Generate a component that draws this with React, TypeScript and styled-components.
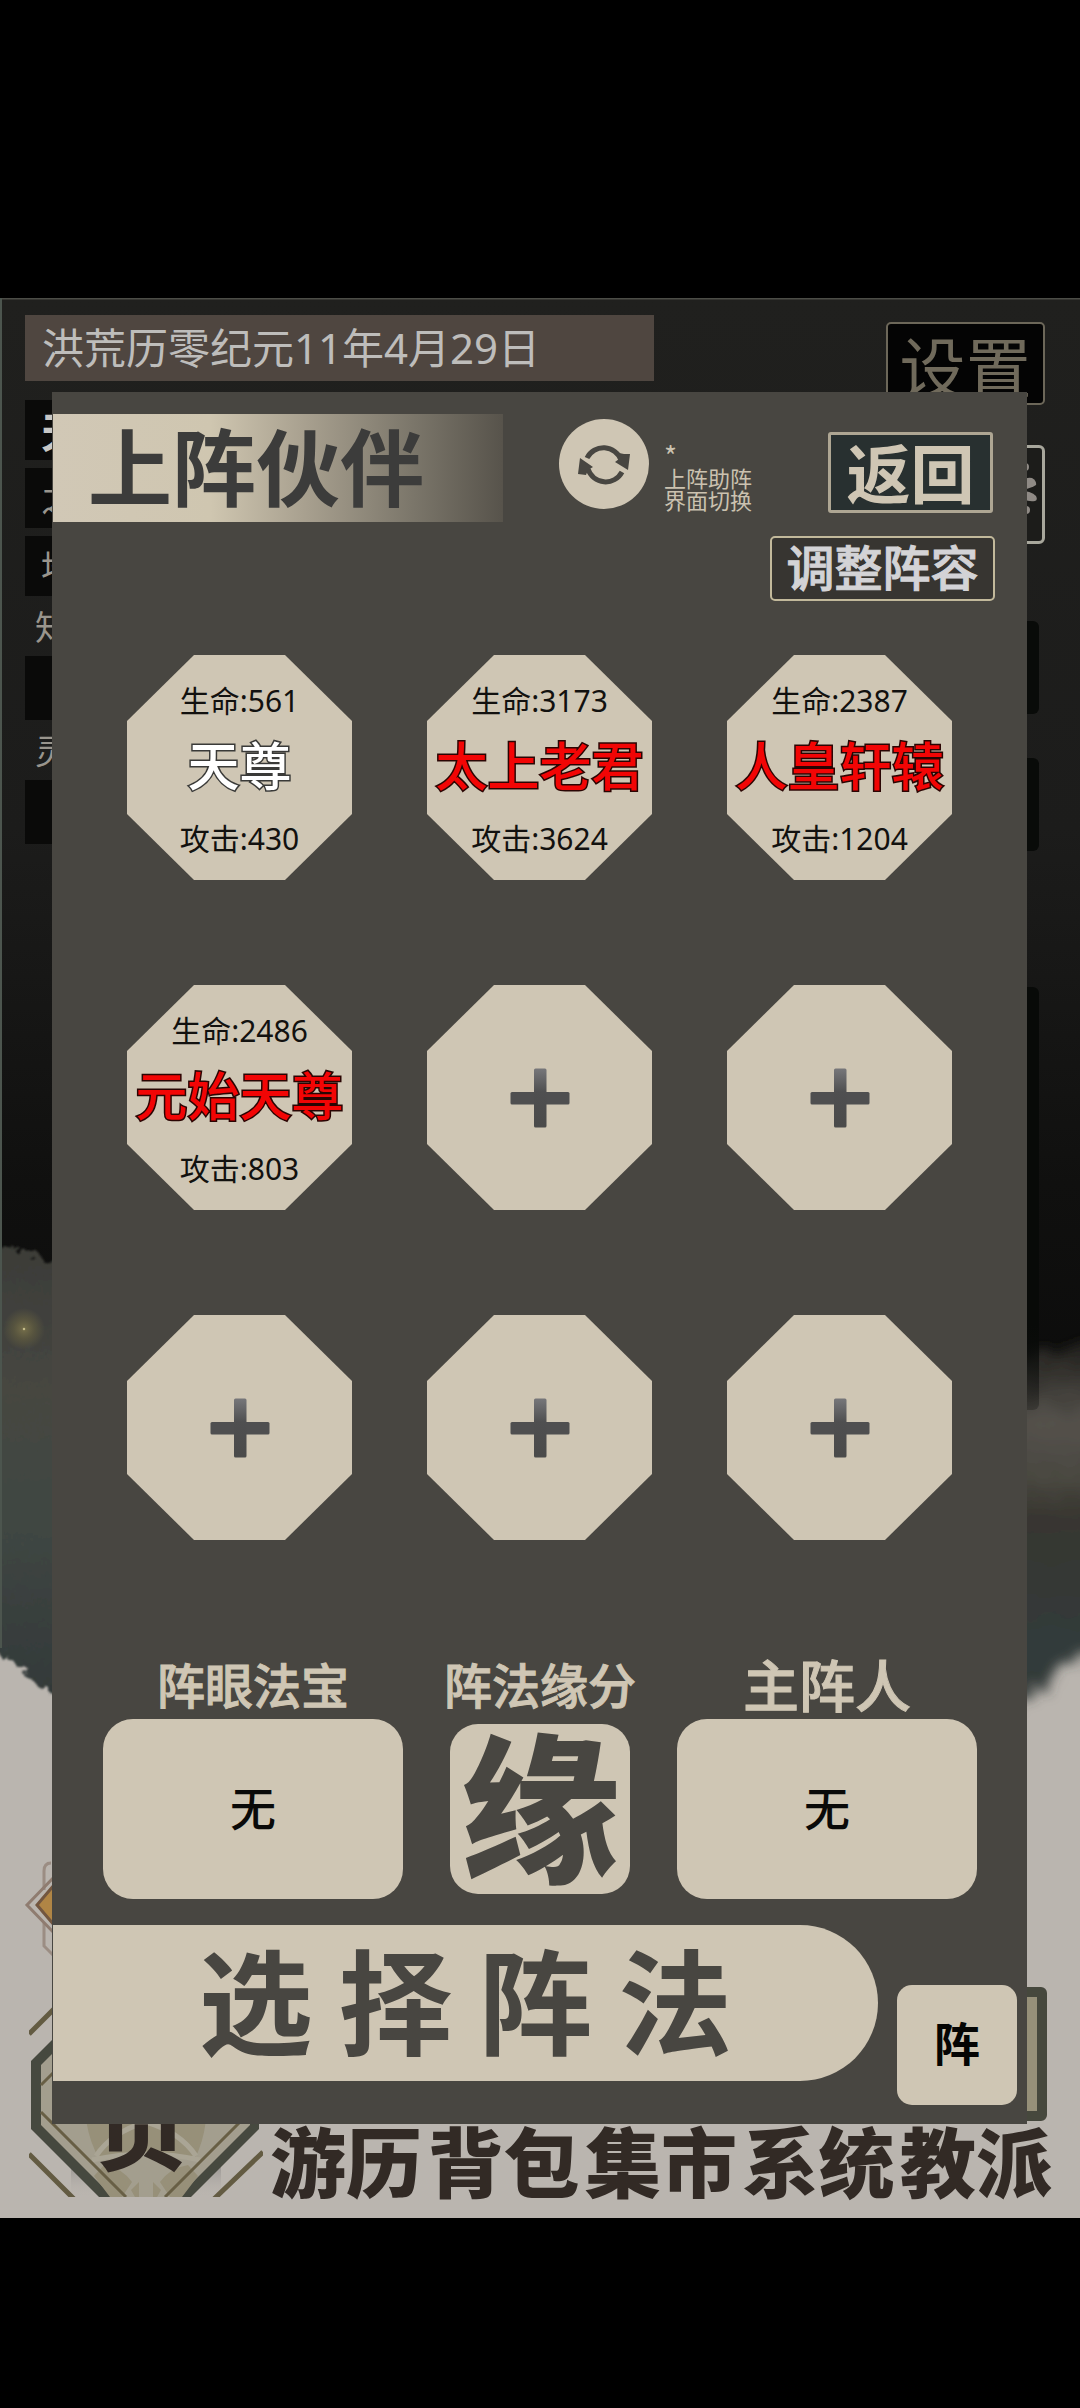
import React from "react";
import styled, { createGlobalStyle } from "styled-components";

const paper = "#cfc6b4";
const ink = "#484641";
const sans = `"Noto Sans", "Noto Sans CJK SC", sans-serif`;
const cjk = `"Noto Sans CJK SC", "Noto Sans", sans-serif`;

const GlobalStyle = createGlobalStyle`
  *, *::before, *::after { box-sizing: border-box; }
  body { margin: 0; background: #000; font-family: ${sans}; }
  button { margin: 0; padding: 0; border: 0; background: none; font: inherit; color: inherit; cursor: pointer; }
  h1, h2, p { margin: 0; font-weight: inherit; }
`;

const Page = styled.div`
  min-height: 100vh;
  padding: 298px 0 190px;
  background: #000;
`;

const Scene = styled.div`
  position: relative;
  overflow: hidden;
  padding: 94px 53px 94px 52px;
  background: #bab5af;
`;

const Landscape = styled.svg`
  position: absolute;
  inset: 0;
  width: 100%;
  height: 100%;
`;

const Hud = styled.div`
  position: absolute;
  inset: 0;
  display: flex;
  flex-direction: column;
  justify-content: space-between;
`;

const HudTop = styled.div`
  display: flex;
  justify-content: space-between;
  padding: 17px 35px 0 25px;
`;

const HudLeft = styled.div`
  display: flex;
  flex-direction: column;
`;

const DateBar = styled.p`
  width: 629px;
  height: 66px;
  margin-bottom: 19px;
  padding-left: 17px;
  background: #4f4640;
  color: #bebdbb;
  font-size: 42px;
  line-height: 66px;
  white-space: nowrap;
`;

const StatRow = styled.div<{ $dark?: boolean; $gap?: number; $bold?: boolean }>`
  width: 300px;
  height: 60px;
  margin-bottom: ${(p) => p.$gap ?? 0}px;
  padding-left: ${(p) => (p.$dark ? 16 : 10)}px;
  background: ${(p) => (p.$dark ? "#0a0a09" : "transparent")};
  color: ${(p) => (p.$bold ? "#c8c8c6" : "#99958d")};
  font: ${(p) => (p.$bold ? "700 42px" : "400 34px")}/60px ${cjk};
`;

const StatBar = styled.div`
  width: 300px;
  height: 64px;
  background: #0a0a09;
`;

const HudRight = styled.div`
  display: flex;
  flex-direction: column;
  align-items: flex-end;
  padding-top: 7px;
`;

const SettingsButton = styled.button`
  width: 159px;
  height: 83px;
  border: 2px solid #6c6759;
  border-radius: 5px;
  background: #040404;
  color: #706a5b;
  font: 400 66px/78px ${cjk};
  white-space: nowrap;
`;

const BlossomButton = styled.button`
  width: 159px;
  height: 99px;
  margin-top: 40px;
  border: 3px solid #a8a79c;
  border-radius: 6px;
  background: #1c1c1a;
`;

const ShadeBox = styled.div<{ $height: number; $top: number; $fade?: boolean }>`
  width: 159px;
  height: ${(p) => p.$height}px;
  margin: ${(p) => p.$top}px 6px 0 0;
  border-radius: 6px;
  background: ${(p) =>
    p.$fade ? "linear-gradient(#080a08 0%, #080a08 80%, rgba(20, 21, 19, 0.3) 100%)" : "#090b09"};
`;

const HudBottom = styled.div`
  display: flex;
  align-items: flex-end;
  gap: 7px;
  padding: 0 28px 21px 29px;
`;

const EmblemButton = styled.button`
  position: relative;
  flex: none;
  width: 234px;
  height: 190px;
  padding: 46px 10px 0 0;
  color: #322a25;
  font: 900 88px/88px ${cjk};
`;

const EmblemArt = styled.svg`
  position: absolute;
  inset: 0;
  width: 100%;
  height: 100%;
`;

const EmblemLabel = styled.span`
  position: relative;
`;

const HudFooter = styled.div`
  display: flex;
  flex: 1;
  flex-direction: column;
  align-items: stretch;
`;

const SideTab = styled.div`
  align-self: flex-end;
  width: 120px;
  height: 134px;
  margin-right: 5px;
  border: 10px solid #46483d;
  border-radius: 6px;
  background: #969079;
`;

const Nav = styled.nav`
  display: flex;
  justify-content: space-between;
  color: #322a25;
  font: 900 76px/76px ${cjk};
  white-space: nowrap;
`;

const Panel = styled.main`
  position: relative;
  padding: 22px 0 19px;
  background: ${ink};
`;

const Header = styled.header`
  display: flex;
  align-items: flex-start;
  padding: 0 34px 0 1px;
`;

const Title = styled.h1`
  width: 450px;
  height: 108px;
  padding-left: 35px;
  background: linear-gradient(90deg, #d1c8b6 0%, #cfc6b0 35%, #a8a08f 56%, #7b766a 80%, #57534b 100%);
  color: #3c3c3b;
  font: 700 84px/100px ${cjk};
  white-space: nowrap;
`;

const SwitchButton = styled.button`
  display: grid;
  place-items: center;
  width: 90px;
  height: 90px;
  margin: 5px 0 0 56px;
  border-radius: 50%;
  background: ${paper};
`;

const SwitchNote = styled.p`
  margin: 30px 0 0 15px;
  color: #cbc2b0;
  font: 400 22px/22px ${cjk};
`;

const NoteMark = styled.span`
  display: block;
  font-size: 28px;
`;

const BackButton = styled.button`
  width: 165px;
  height: 81px;
  margin: 18px 0 0 auto;
  padding-bottom: 6px;
  border: 3px solid #aea693;
  border-radius: 3px;
  background: #283030;
  color: ${paper};
  font: 700 64px/68px ${cjk};
  white-space: nowrap;
`;

const AdjustButton = styled.button`
  display: block;
  width: 225px;
  height: 65px;
  margin: 14px 32px 54px auto;
  padding-bottom: 8px;
  border: 2px solid #c2b99b;
  border-radius: 5px;
  background: #373531;
  color: #d3d3d6;
  font: 500 48px/52px ${cjk};
  -webkit-text-stroke: 1px #d3d3d6;
  white-space: nowrap;
`;

const Formation = styled.section`
  display: grid;
  grid-template-columns: repeat(3, 225px);
  justify-content: space-between;
  row-gap: 105px;
  padding: 0 75px;
`;

const Slot = styled.button`
  display: flex;
  flex-direction: column;
  align-items: center;
  justify-content: center;
  height: 225px;
  background: ${paper};
  clip-path: polygon(67px 0, 158px 0, 100% 66px, 100% 159px, 158px 100%, 67px 100%, 0 159px, 0 66px);
`;

const Stat = styled.span`
  padding-top: 4px;
  color: #12110f;
  font-size: 30px;
  line-height: 36px;
  white-space: nowrap;
`;

const Name = styled.span<{ $hero?: boolean }>`
  padding-bottom: 8px;
  color: ${(p) => (p.$hero ? "#fff" : "#f20505")};
  font: 500 52px/90px ${cjk};
  -webkit-text-stroke: 3px ${(p) => (p.$hero ? "#3a3a38" : "#2a0503")};
  paint-order: stroke fill;
  white-space: nowrap;
`;

const Options = styled.section`
  display: flex;
  justify-content: space-between;
  padding: 115px 50px 0 51px;
`;

const Option = styled.div`
  display: flex;
  flex-direction: column;
  align-items: center;
`;

const OptionTitle = styled.h2<{ $large?: boolean }>`
  padding-bottom: 8px;
  color: ${paper};
  font: 500 ${(p) => (p.$large ? 56 : 48)}px/56px ${cjk};
  -webkit-text-stroke: 1px ${paper};
  white-space: nowrap;
`;

const OptionButton = styled.button`
  width: 300px;
  height: 180px;
  padding-bottom: 6px;
  border-radius: 30px;
  background: ${paper};
  color: #0a0a09;
  font: 500 46px/60px ${cjk};
`;

const FateButton = styled.button`
  width: 180px;
  height: 170px;
  margin-top: 5px;
  padding-bottom: 18px;
  border-radius: 28px;
  background: ${paper};
  color: ${ink};
  font: 900 160px/152px ${cjk};
`;

const Actions = styled.footer`
  display: flex;
  justify-content: space-between;
  height: 180px;
  margin-top: 26px;
  padding: 0 10px 0 1px;
`;

const ChooseButton = styled.button`
  width: 825px;
  height: 156px;
  padding-bottom: 12px;
  border-radius: 0 78px 78px 0;
  background: ${paper};
  color: ${ink};
  font: 700 114px/144px ${cjk};
  white-space: nowrap;
`;

const FormationButton = styled.button`
  align-self: flex-end;
  width: 120px;
  height: 120px;
  padding-bottom: 8px;
  border-radius: 15px;
  background: ${paper};
  color: #050504;
  font: 700 46px/60px ${cjk};
`;

type Member = { name: string; hp: number; atk: number; hero?: boolean };

const members: (Member | null)[] = [
  { name: "天尊", hp: 561, atk: 430, hero: true },
  { name: "太上老君", hp: 3173, atk: 3624 },
  { name: "人皇轩辕", hp: 2387, atk: 1204 },
  { name: "元始天尊", hp: 2486, atk: 803 },
  null,
  null,
  null,
  null,
  null,
];

const navItems = ["游历", "背包", "集市", "系统", "教派"];

function Background() {
  return (
    <Landscape viewBox="0 0 1080 1920" preserveAspectRatio="none" aria-hidden="true">
      <defs>
        <linearGradient id="night" x1="0" y1="0" x2="0" y2="1">
          <stop offset="0" stopColor="#20201e" />
          <stop offset="0.45" stopColor="#1c1c1b" />
          <stop offset="0.75" stopColor="#10100f" />
          <stop offset="1" stopColor="#0a0a0a" />
        </linearGradient>
        <linearGradient id="hillLeft" x1="0" y1="0" x2="0" y2="1">
          <stop offset="0" stopColor="#3b3c38" />
          <stop offset="0.3" stopColor="#464641" />
          <stop offset="0.6" stopColor="#3f4643" />
          <stop offset="1" stopColor="#313737" />
        </linearGradient>
        <linearGradient id="hillRight" x1="0" y1="0" x2="0" y2="1">
          <stop offset="0" stopColor="#1b1b18" />
          <stop offset="0.12" stopColor="#35332f" />
          <stop offset="0.24" stopColor="#55524c" />
          <stop offset="0.4" stopColor="#48463f" />
          <stop offset="0.48" stopColor="#37362f" />
          <stop offset="0.78" stopColor="#333a3a" />
          <stop offset="1" stopColor="#343a39" />
        </linearGradient>
        <radialGradient id="firefly">
          <stop offset="0" stopColor="#fff6b8" />
          <stop offset="0.08" stopColor="#706a48" />
          <stop offset="0.5" stopColor="#5c583f" stopOpacity="0.8" />
          <stop offset="1" stopColor="#5b5840" stopOpacity="0" />
        </radialGradient>
        <filter id="mist" x="-20%" y="-20%" width="140%" height="140%">
          <feTurbulence type="fractalNoise" baseFrequency="0.12" numOctaves="3" seed="4" result="n" />
          <feDisplacementMap in="SourceGraphic" in2="n" xChannelSelector="R" yChannelSelector="G" scale="20" result="d" />
          <feGaussianBlur in="d" stdDeviation="1" />
        </filter>
        <filter id="haze" x="-30%" y="-30%" width="160%" height="160%">
          <feTurbulence type="fractalNoise" baseFrequency="0.08" numOctaves="3" seed="9" result="n" />
          <feDisplacementMap in="SourceGraphic" in2="n" xChannelSelector="R" yChannelSelector="G" scale="40" result="d" />
          <feGaussianBlur in="d" stdDeviation="6" />
        </filter>
      </defs>
      <rect width="1080" height="1180" fill="url(#night)" />
      <path d="M-40 948 L10 948 L40 958 L90 985 L90 1422 L54 1400 L28 1378 L0 1354 L-40 1330Z" fill="url(#hillLeft)" filter="url(#mist)" />
      <path d="M980 1070 L1140 1030 L1140 1345 L1080 1360 L1027 1400 L980 1420Z" fill="url(#hillRight)" filter="url(#haze)" />
      <circle cx="24" cy="1031" r="21" fill="url(#firefly)" />
      <g fill="none" stroke="#8f7c70" strokeWidth="3">
        <path d="M51 1565 q-7 0 -7 8 V1592 M44 1625 V1648 L56 1660" strokeOpacity="0.7" />
        <path d="M56 1577 L27 1607 L56 1637" />
        <path d="M60 1580 L37 1607 L60 1634" stroke="#725640" fill="#b08545" />
      </g>
      <path d="M0 0.5H1080" stroke="#4c4d47" strokeWidth="2" />
      <path d="M1 0V1350" stroke="#4c554e" strokeWidth="2" />
    </Landscape>
  );
}

function Emblem() {
  return (
    <EmblemButton type="button">
      <EmblemArt viewBox="29 2007 234 190" aria-hidden="true">
        <defs>
          <linearGradient id="cast" x1="0" y1="0" x2="0" y2="1">
            <stop offset="0" stopColor="#8d8a88" />
            <stop offset="1" stopColor="#bab5af" stopOpacity="0" />
          </linearGradient>
        </defs>
        <path d="M71 2160H221V2197H71Z" fill="url(#cast)" />
        <path d="M99 1993L31 2061V2129L99 2197H191L259 2129V2061L191 1993Z" fill="#46493f" />
        <path d="M113 1993L41 2065V2125L113 2197H178L250 2125V2065L178 1993Z" fill="#a39e8e" />
        <path d="M86 2120 Q90 2144 100 2160 Q150 2150 194 2160 Q203 2144 206 2120Z" fill="#979079" />
        <path d="M104 2165 Q122 2168 132 2182 L122 2197 L110 2197 L94 2176Z M188 2165 Q170 2168 160 2182 L170 2197 L182 2197 L198 2176Z" fill="#979079" />
        <path d="M131 2190l8-8v15h-4z M161 2190l-8-8v15h4z" fill="#979079" />
        <path d="M96 2156 Q112 2132 146 2122 Q180 2132 196 2156 M92 2160 Q146 2148 200 2160" fill="none" stroke="#aaa595" strokeWidth="5" />
        <path d="M41 2085L61 2065 M41 2112L126 2197 M165 2197L240 2122" stroke="#685f45" strokeWidth="3" fill="none" />
        <path d="M29 2034L56 2007 M29 2154L74 2199 M263 2152L214 2199" stroke="#635b42" strokeWidth="5" fill="none" />
      </EmblemArt>
      <EmblemLabel>页</EmblemLabel>
    </EmblemButton>
  );
}

function SwitchIcon() {
  return (
    <svg width="54" height="48" viewBox="0 0 54 48" aria-hidden="true">
      <path d="M10 18 A18.5 18.5 0 0 1 44 20" fill="none" stroke={ink} strokeWidth="5" />
      <path d="M45 32 A18.5 18.5 0 0 1 11 29" fill="none" stroke={ink} strokeWidth="5" />
      <path d="M38 22 L42 19 L42 13 L47 14 L53 14 L51 30Z" fill={ink} />
      <path d="M16 27 L11 30 L9 35 L1 34 L3 18Z" fill={ink} />
    </svg>
  );
}

function PlusIcon() {
  return (
    <svg width="60" height="60" viewBox="0 0 60 60" aria-hidden="true">
      <defs>
        <linearGradient id="plus" x1="0" y1="0" x2="0" y2="1">
          <stop offset="0" stopColor="#77777a" />
          <stop offset="0.4" stopColor="#4f4f50" />
          <stop offset="1" stopColor="#4a4a4a" />
        </linearGradient>
      </defs>
      <rect x="0.5" y="24" width="59" height="12.5" rx="1.5" fill="#4f4f50" />
      <rect x="24" y="0.5" width="12.5" height="59" rx="1.5" fill="url(#plus)" />
    </svg>
  );
}

function BlossomIcon() {
  return (
    <svg width="153" height="93" viewBox="888 448 153 93" aria-hidden="true">
      <g fill="#8f8a85">
        <path d="M1012 491 Q1020 476 1031 478 Q1036 481 1035 485 Q1030 489 1012 491Z" />
        <path d="M1012 491 Q1030 490 1035 496 Q1037 500 1034 501 Q1023 503 1012 491Z" />
        <circle cx="1024" cy="467" r="4" />
        <circle cx="1025" cy="510" r="4" />
      </g>
    </svg>
  );
}

export default function App() {
  return (
    <>
      <GlobalStyle />
      <Page>
        <Scene>
          <Background />
          <Hud>
            <HudTop>
              <HudLeft>
                <DateBar>洪荒历零纪元11年4月29日</DateBar>
                <StatRow $dark $bold $gap={8}>天</StatRow>
                <StatRow $dark $gap={8}>之</StatRow>
                <StatRow $dark>地</StatRow>
                <StatRow>知</StatRow>
                <StatBar />
                <StatRow>灵</StatRow>
                <StatBar />
              </HudLeft>
              <HudRight>
                <SettingsButton type="button">设置</SettingsButton>
                <BlossomButton type="button" aria-label="花">
                  <BlossomIcon />
                </BlossomButton>
                <ShadeBox $top={77} $height={93} />
                <ShadeBox $top={44} $height={93} />
                <ShadeBox $top={136} $height={423} $fade />
              </HudRight>
            </HudTop>
            <HudBottom>
              <Emblem />
              <HudFooter>
                <SideTab />
                <Nav>
                  {navItems.map((item) => (
                    <button type="button" key={item}>{item}</button>
                  ))}
                </Nav>
              </HudFooter>
            </HudBottom>
          </Hud>
          <Panel>
            <Header>
              <Title>上阵伙伴</Title>
              <SwitchButton type="button" aria-label="切换">
                <SwitchIcon />
              </SwitchButton>
              <SwitchNote>
                <NoteMark>*</NoteMark>
                上阵助阵<br />界面切换
              </SwitchNote>
              <BackButton type="button">返回</BackButton>
            </Header>
            <AdjustButton type="button">调整阵容</AdjustButton>
            <Formation>
              {members.map((member, i) =>
                member ? (
                  <Slot type="button" key={i}>
                    <Stat>生命:{member.hp}</Stat>
                    <Name $hero={member.hero}>{member.name}</Name>
                    <Stat>攻击:{member.atk}</Stat>
                  </Slot>
                ) : (
                  <Slot type="button" key={i} aria-label="添加">
                    <PlusIcon />
                  </Slot>
                )
              )}
            </Formation>
            <Options>
              <Option>
                <OptionTitle>阵眼法宝</OptionTitle>
                <OptionButton type="button">无</OptionButton>
              </Option>
              <Option>
                <OptionTitle>阵法缘分</OptionTitle>
                <FateButton type="button">缘</FateButton>
              </Option>
              <Option>
                <OptionTitle $large>主阵人</OptionTitle>
                <OptionButton type="button">无</OptionButton>
              </Option>
            </Options>
            <Actions>
              <ChooseButton type="button">选 择 阵 法</ChooseButton>
              <FormationButton type="button">阵</FormationButton>
            </Actions>
          </Panel>
        </Scene>
      </Page>
    </>
  );
}
